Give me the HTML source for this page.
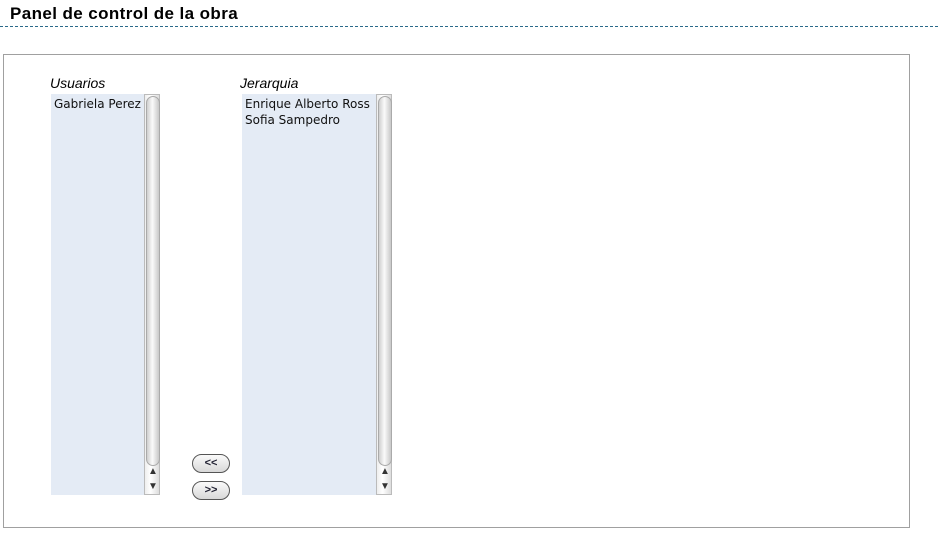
<!DOCTYPE html>
<html><head><style>
body{margin:0;width:938px;height:533px;background:#fff;position:relative;font-family:"Liberation Sans",sans-serif;overflow:hidden}
.h{position:absolute;left:10px;top:4px;font-weight:bold;font-size:17px;letter-spacing:0.4px;color:#000}
.dash{position:absolute;left:0;top:26px;width:938px;border-top:1px dashed #2a6a8a}
.panel{position:absolute;left:3px;top:54px;width:905px;height:472px;border:1px solid #a0a0a0}
.lab{position:absolute;font-style:italic;font-size:14px;top:75px}
.list{position:absolute;top:94px;height:401px;background:#e4ebf5;font-family:"DejaVu Sans",sans-serif;font-size:12px;line-height:16px;padding:2px 2px 2px 3px;box-sizing:border-box;color:#111;white-space:nowrap}
.sb{position:absolute;top:94px;width:16px;height:401px;box-sizing:border-box;border:1px solid #bbb;background:linear-gradient(90deg,#eee,#fff 40%,#ddd)}
.thumb{position:absolute;left:1px;top:1px;width:12px;height:368px;border-radius:7px;background:linear-gradient(90deg,#cfcfcf,#fafafa 45%,#c8c8c8);border:1px solid #aaa}
.ar{position:absolute;left:3px;font-size:10px;color:#333}
.btn{position:absolute;left:192px;width:38px;height:19px;box-sizing:border-box;border:1px solid #555;border-radius:10px;background:linear-gradient(#fafafa,#d8d8d8);font-size:11px;text-align:center;line-height:17px;font-weight:bold;color:#223}
</style></head><body>
<div class="h">Panel de control de la obra</div>
<div class="dash"></div>
<div class="panel"></div>
<div class="lab" style="left:50px">Usuarios</div>
<div class="lab" style="left:240px">Jerarquia</div>
<div class="list" style="left:51px;width:93px;overflow:hidden">Gabriela Perez</div>
<div class="sb" style="left:144px"><div class="thumb"></div><div class="ar" style="top:371px">▲</div><div class="ar" style="top:386px">▼</div></div>
<div class="list" style="left:242px;width:134px;overflow:hidden">Enrique Alberto Ross<br>Sofia Sampedro</div>
<div class="sb" style="left:376px"><div class="thumb"></div><div class="ar" style="top:371px">▲</div><div class="ar" style="top:386px">▼</div></div>
<div class="btn" style="top:454px">&lt;&lt;</div>
<div class="btn" style="top:481px">&gt;&gt;</div>
</body></html>
